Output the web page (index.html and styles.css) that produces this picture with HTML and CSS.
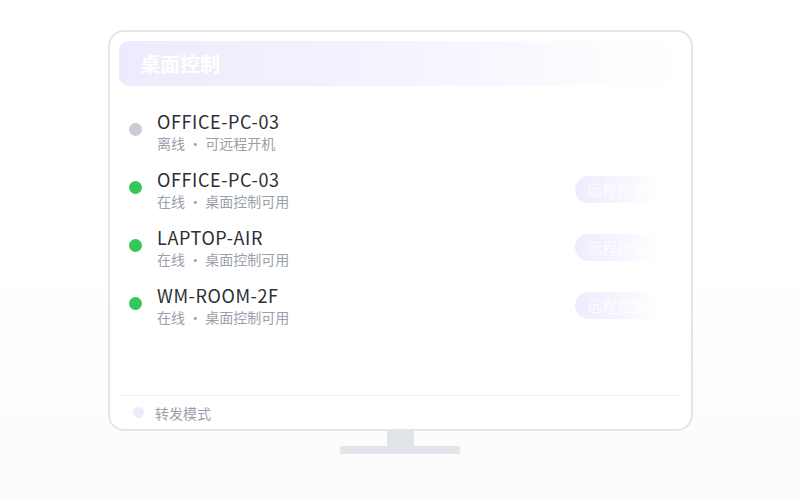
FILE: index.html
```html
<!DOCTYPE html>
<html lang="zh">
<head>
<meta charset="utf-8">
<link rel="stylesheet" href="styles.css">
</head>
<body>
<div class="scene">
  <div class="monitor">
    <div class="header">桌面控制</div>
    <div class="list">
      <div class="row">
        <span class="dot off"></span>
        <div class="info">
          <div class="name">OFFICE-PC-03</div>
          <div class="sub">离线 · 可远程开机</div>
        </div>
      </div>
      <div class="row">
        <span class="dot on"></span>
        <div class="info">
          <div class="name">OFFICE-PC-03</div>
          <div class="sub">在线 · 桌面控制可用</div>
        </div>
        <span class="btn">远程控制</span>
      </div>
      <div class="row">
        <span class="dot on"></span>
        <div class="info">
          <div class="name">LAPTOP-AIR</div>
          <div class="sub">在线 · 桌面控制可用</div>
        </div>
        <span class="btn">远程控制</span>
      </div>
      <div class="row">
        <span class="dot on"></span>
        <div class="info">
          <div class="name">WM-ROOM-2F</div>
          <div class="sub">在线 · 桌面控制可用</div>
        </div>
        <span class="btn">远程控制</span>
      </div>
    </div>
    <div class="footer">
      <span class="fdot"></span>
      <span class="ftext">转发模式</span>
    </div>
  </div>
  <div class="neck"></div>
  <div class="base"></div>
</div>
</body>
</html>
```
FILE: styles.css
```css
html, body {
  margin: 0;
  padding: 0;
}
body {
  width: 800px;
  height: 500px;
  background: linear-gradient(180deg, #ffffff 0%, #ffffff 50%, #fbfbfc 100%);
  font-family: "Noto Sans CJK SC", "Noto Sans", sans-serif;
  overflow: hidden;
}
.scene {
  display: flex;
  flex-direction: column;
  align-items: center;
  padding-top: 30px;
}
.monitor {
  width: 585px;
  height: 401px;
  box-sizing: border-box;
  border: 2px solid #e3e5e8;
  border-radius: 16px;
  background: #ffffff;
  padding: 9px 9px 0 9px;
  display: flex;
  flex-direction: column;
  margin-left: 1px;
}
.header {
  height: 45px;
  border-radius: 10px;
  background: linear-gradient(90deg, rgba(237,233,253,0.95) 0%, rgba(243,240,254,0.8) 50%, rgba(255,255,255,0) 100%);
  color: #ffffff;
  font-weight: 700;
  font-size: 20px;
  line-height: 45px;
  padding-left: 21px;
}
.list {
  flex: 1;
  display: flex;
  flex-direction: column;
  gap: 14px;
  padding: 23px 23px 0 0;
}
.row {
  display: flex;
  align-items: center;
  height: 44px;
}
.dot {
  width: 13px;
  height: 13px;
  border-radius: 50%;
  margin-left: 10px;
  margin-right: 15px;
  margin-top: -3px;
  flex: none;
}
.dot.off { background: #c9ccd3; }
.dot.on { background: #34c759; }
.info {
  flex: 1;
  display: flex;
  flex-direction: column;
}
.name {
  font-family: "Noto Sans CJK SC", "Noto Sans", sans-serif;
  font-size: 18px;
  line-height: 22px;
  color: #2b2f36;
  letter-spacing: 0.6px;
}
.sub {
  font-size: 14px;
  line-height: 20px;
  color: #9aa0aa;
  margin-top: 1px;
}
.btn {
  height: 27px;
  line-height: 27px;
  padding: 0 12px;
  border-radius: 14px;
  font-family: "Noto Serif CJK SC", "Liberation Serif", serif;
  font-size: 15px;
  color: #ffffff;
  background: linear-gradient(90deg, rgba(238,234,253,0.95) 0%, rgba(243,240,254,0.7) 55%, rgba(255,255,255,0) 100%);
}
.footer {
  border-top: 1px solid #eef0f3;
  height: 33px;
  display: flex;
  align-items: center;
  padding-left: 12px;
  margin: 0 2px;
}
.fdot {
  width: 11px;
  height: 11px;
  border-radius: 50%;
  background: #efebfd;
  margin-right: 11px;
}
.ftext {
  font-size: 14px;
  color: #9aa0aa;
}
.neck {
  width: 27px;
  height: 15px;
  background: #e1e4e8;
}
.base {
  width: 120px;
  height: 8px;
  background: #e1e4e8;
}
```
